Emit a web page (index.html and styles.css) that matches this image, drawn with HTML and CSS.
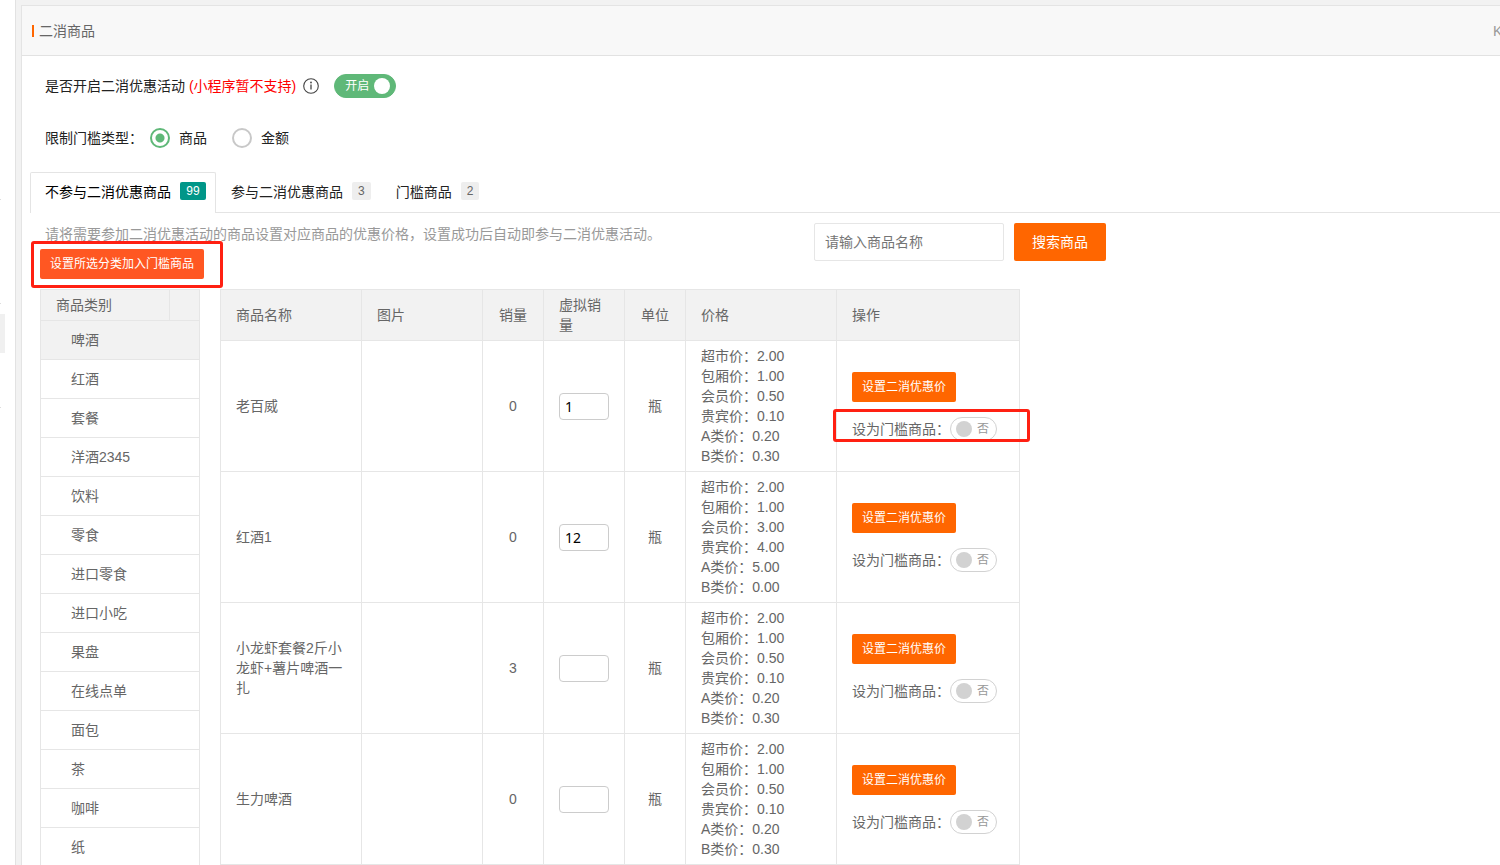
FILE: index.html
```html
<!DOCTYPE html>
<html lang="zh-CN">
<head>
<meta charset="utf-8">
<title>二消商品</title>
<link rel="stylesheet" href="styles.css">
</head>
<body>
<div class="app">
  <aside class="sidebar">
    <span class="side-tick"></span>
    <span class="side-tick"></span>
    <span class="side-active"></span>
    <span class="side-tick"></span>
  </aside>
  <main class="panel">
    <header class="panel-head">
      <h1 class="panel-title">二消商品</h1>
      <span class="panel-user">K</span>
    </header>
    <div class="panel-body">
      <div class="settings">
        <div class="setting">
          <span>是否开启二消优惠活动 <span class="warn">(小程序暂不支持)</span></span>
          <svg class="info" viewBox="0 0 16 16" width="16" height="16" aria-hidden="true"><circle cx="8" cy="8" r="7.3" fill="none" stroke="#444" stroke-width="1.1"/><path d="M8 6.5V11.6" stroke="#444" stroke-width="1.3"/><circle cx="8" cy="4.5" r=".9" fill="#444"/></svg>
          <label class="switch switch-on"><input type="checkbox" checked><span>开启</span><i class="knob"></i></label>
        </div>
        <div class="setting">
          <span class="setting-label">限制门槛类型：</span>
          <label class="radio"><input type="radio" name="kind" checked><span>商品</span></label>
          <label class="radio"><input type="radio" name="kind"><span>金额</span></label>
        </div>
      </div>
      <nav class="tabs">
        <button type="button" class="tab tab-active">不参与二消优惠商品<span class="badge badge-green">99</span></button>
        <button type="button" class="tab">参与二消优惠商品<span class="badge">3</span></button>
        <button type="button" class="tab">门槛商品<span class="badge">2</span></button>
      </nav>
      <div class="content">
        <div class="toolbar">
          <div class="toolbar-main">
            <p class="hint">请将需要参加二消优惠活动的商品设置对应商品的优惠价格，设置成功后自动即参与二消优惠活动。</p>
            <div class="marked"><button type="button" class="btn btn-small btn-red">设置所选分类加入门槛商品</button><span class="mark mark-button"></span></div>
          </div>
          <form class="search">
            <input class="search-input" type="text" placeholder="请输入商品名称" aria-label="请输入商品名称">
            <button type="button" class="btn">搜索商品</button>
          </form>
        </div>
        <div class="lists">
          <table class="grid categories">
            <colgroup><col><col class="col-blank"></colgroup>
            <thead><tr><th>商品类别</th><th></th></tr></thead>
            <tbody>
              <tr class="selected"><td colspan="2">啤酒</td></tr>
              <tr><td colspan="2">红酒</td></tr>
              <tr><td colspan="2">套餐</td></tr>
              <tr><td colspan="2">洋酒2345</td></tr>
              <tr><td colspan="2">饮料</td></tr>
              <tr><td colspan="2">零食</td></tr>
              <tr><td colspan="2">进口零食</td></tr>
              <tr><td colspan="2">进口小吃</td></tr>
              <tr><td colspan="2">果盘</td></tr>
              <tr><td colspan="2">在线点单</td></tr>
              <tr><td colspan="2">面包</td></tr>
              <tr><td colspan="2">茶</td></tr>
              <tr><td colspan="2">咖啡</td></tr>
              <tr><td colspan="2">纸</td></tr>
            </tbody>
          </table>
          <table class="grid products">
            <colgroup><col class="col-name"><col class="col-image"><col class="col-narrow"><col class="col-virtual"><col class="col-narrow"><col class="col-price"><col></colgroup>
            <thead><tr><th>商品名称</th><th>图片</th><th class="center">销量</th><th>虚拟销量</th><th class="center">单位</th><th>价格</th><th>操作</th></tr></thead>
            <tbody>
              <tr>
                <td>老百威</td><td></td><td class="center">0</td>
                <td><input class="count" type="text" value="1" aria-label="虚拟销量"></td>
                <td class="center">瓶</td>
                <td>超市价：2.00<br>包厢价：1.00<br>会员价：0.50<br>贵宾价：0.10<br>A类价：0.20<br>B类价：0.30</td>
                <td><div class="actions"><button type="button" class="btn btn-small">设置二消优惠价</button><div class="marked threshold"><span>设为门槛商品：</span><label class="switch"><input type="checkbox" aria-label="设为门槛商品"><i class="knob"></i><span>否</span></label><span class="mark mark-switch"></span></div></div></td>
              </tr>
              <tr>
                <td>红酒1</td><td></td><td class="center">0</td>
                <td><input class="count" type="text" value="12" aria-label="虚拟销量"></td>
                <td class="center">瓶</td>
                <td>超市价：2.00<br>包厢价：1.00<br>会员价：3.00<br>贵宾价：4.00<br>A类价：5.00<br>B类价：0.00</td>
                <td><div class="actions"><button type="button" class="btn btn-small">设置二消优惠价</button><div class="threshold"><span>设为门槛商品：</span><label class="switch"><input type="checkbox" aria-label="设为门槛商品"><i class="knob"></i><span>否</span></label></div></div></td>
              </tr>
              <tr>
                <td>小龙虾套餐2斤小龙虾+薯片啤酒一扎</td><td></td><td class="center">3</td>
                <td><input class="count" type="text" aria-label="虚拟销量"></td>
                <td class="center">瓶</td>
                <td>超市价：2.00<br>包厢价：1.00<br>会员价：0.50<br>贵宾价：0.10<br>A类价：0.20<br>B类价：0.30</td>
                <td><div class="actions"><button type="button" class="btn btn-small">设置二消优惠价</button><div class="threshold"><span>设为门槛商品：</span><label class="switch"><input type="checkbox" aria-label="设为门槛商品"><i class="knob"></i><span>否</span></label></div></div></td>
              </tr>
              <tr>
                <td>生力啤酒</td><td></td><td class="center">0</td>
                <td><input class="count" type="text" aria-label="虚拟销量"></td>
                <td class="center">瓶</td>
                <td>超市价：2.00<br>包厢价：1.00<br>会员价：0.50<br>贵宾价：0.10<br>A类价：0.20<br>B类价：0.30</td>
                <td><div class="actions"><button type="button" class="btn btn-small">设置二消优惠价</button><div class="threshold"><span>设为门槛商品：</span><label class="switch"><input type="checkbox" aria-label="设为门槛商品"><i class="knob"></i><span>否</span></label></div></div></td>
              </tr>
            </tbody>
          </table>
        </div>
      </div>
    </div>
  </main>
</div>
</body>
</html>
```
FILE: styles.css
```css
* { box-sizing: border-box; }

body {
  margin: 0;
  color: #222;
  background: #f2f2f2;
  font: 14px/20px "Liberation Sans", "Noto Sans CJK SC", sans-serif;
}

button, input { font: inherit; }

.app {
  display: flex;
  gap: 5px;
  height: 100vh;
  overflow: hidden;
}

/* Sidebar edge */
.sidebar {
  display: flex;
  flex: none;
  flex-direction: column;
  width: 16px;
  padding-top: 199px;
  background: #fff;
  border-right: 1px solid #e2e2e2;
}
.side-tick { width: 1px; height: 1px; margin-bottom: 103px; background: #ddd; }
.side-tick + .side-tick { margin-bottom: 10px; }
.side-active { width: 5px; height: 39px; margin-bottom: 54px; background: #f0f0f0; }

/* Panel */
.panel {
  flex: 1;
  min-width: 0;
  margin-top: 5px;
  background: #fff;
  border: 1px solid #e4e4e4;
  border-width: 1px 0 0 1px;
}
.panel-head {
  display: flex;
  align-items: center;
  justify-content: space-between;
  height: 50px;
  padding-left: 10px;
  background: #f8f8f8;
  border-bottom: 1px solid #e2e2e2;
}
.panel-title {
  display: flex;
  align-items: center;
  gap: 5px;
  margin: 0;
  color: #666;
  font-size: 14px;
  font-weight: 400;
}
.panel-title::before { content: ""; width: 2px; height: 12px; background: #ff6600; }
.panel-user { width: 7px; overflow: hidden; color: #999; }
.panel-body { padding: 18px 0 0 8px; }

/* Settings */
.settings {
  display: flex;
  flex-direction: column;
  gap: 30px;
  padding: 0 15px 24px;
}
.setting { display: flex; align-items: center; }
.warn { color: #f00; }
.info { margin: 0 15px 0 7px; }
.setting-label { margin-right: 7px; }

.switch {
  position: relative;
  display: inline-flex;
  align-items: center;
  gap: 5px;
  height: 24px;
  padding: 0 7px 0 5px;
  color: #999;
  border: 1px solid #d2d2d2;
  border-radius: 12px;
  font-size: 12px;
}
.switch input {
  position: absolute;
  inset: 0;
  width: 100%;
  height: 100%;
  margin: 0;
  opacity: 0;
}
.knob { width: 16px; height: 16px; background: #d2d2d2; border-radius: 50%; }
.switch-on { padding: 0 5px 0 10px; color: #fff; background: #5fb878; border-color: #5fb878; }
.switch-on .knob { background: #fff; }

.radio { display: inline-flex; align-items: center; gap: 9px; margin-right: 25px; }
.radio input {
  width: 20px;
  height: 20px;
  margin: 0;
  appearance: none;
  border: 2px solid #c8c8c8;
  border-radius: 50%;
}
.radio input:checked {
  border-color: #5fb878;
  background: radial-gradient(circle, #5fb878 4px, #fff 5px);
}

/* Tabs */
.tabs { display: flex; border-bottom: 1px solid #e4e4e4; }
.tab {
  display: flex;
  align-items: center;
  gap: 9px;
  height: 40px;
  padding: 0 10px 0 15px;
  color: #222;
  background: none;
  border: 0;
}
.tab-active {
  height: 41px;
  margin-bottom: -1px;
  padding: 0 9px 2px 14px;
  color: #000;
  background: #fff;
  border: 1px solid #e4e4e4;
  border-bottom: 0;
  border-radius: 2px 2px 0 0;
}
.badge {
  margin-bottom: 2px;
  padding: 0 6px;
  color: #666;
  background: #eee;
  border-radius: 2px;
  font-size: 12px;
  line-height: 18px;
}
.badge-green { min-width: 26px; color: #fff; background: #009688; }

/* Toolbar */
.content { padding: 10px 10px 0; }
.toolbar { display: flex; align-items: flex-start; margin-bottom: 10px; }
.toolbar-main { flex: 0 1 774px; }
.hint { margin: 0 0 4px 5px; color: #999; line-height: 22px; }
.search { display: flex; flex: none; gap: 10px; }
.search-input {
  width: 190px;
  height: 38px;
  padding: 0 10px;
  border: 1px solid #e6e6e6;
  border-radius: 2px;
}
.search-input::placeholder { color: #757575; }
.btn {
  height: 38px;
  padding: 0 18px;
  color: #fff;
  background: #ff6600;
  border: 0;
  border-radius: 2px;
  white-space: nowrap;
}
.btn-small { display: block; height: 30px; padding: 0 10px; font-size: 12px; }
.btn-red { background: #ff5722; }

/* Red callout frames laid over the controls */
.marked { position: relative; width: max-content; }
.mark { position: absolute; border: 3px solid #ff2012; border-radius: 3px; pointer-events: none; }
.mark-button { inset: -8px -19px -9px -9px; }
.mark-switch { inset: -8px -33px -1px -19px; }

/* Tables */
.lists { display: flex; align-items: flex-start; gap: 20px; }
.grid { table-layout: fixed; border-collapse: collapse; color: #666; background: #fff; }
.grid th, .grid td {
  padding: 5px 15px;
  border: 1px solid #e6e6e6;
  font-weight: 400;
  text-align: left;
}
.grid th { background: #f2f2f2; }
.grid .center { padding: 5px; text-align: center; }
.categories { flex: none; width: 160px; }
.grid.categories td { padding: 9px 30px; }
.selected { background: #f2f2f2; }
.col-blank { width: 30px; }
.products { flex: 0 1 auto; width: 800px; }
.col-name { width: 141px; }
.col-image { width: 121px; }
.col-narrow { width: 61px; }
.col-virtual { width: 81px; }
.col-price { width: 151px; }
.count {
  display: block;
  width: 50px;
  height: 27px;
  padding: 0 5px;
  color: #000;
  border: 1px solid #ccc;
  border-radius: 4px;
  font-family: "Noto Sans", "Noto Sans CJK SC", sans-serif;
}
.actions { display: flex; flex-direction: column; align-items: flex-start; gap: 15px; }
.threshold { display: flex; align-items: center; white-space: nowrap; }
```
